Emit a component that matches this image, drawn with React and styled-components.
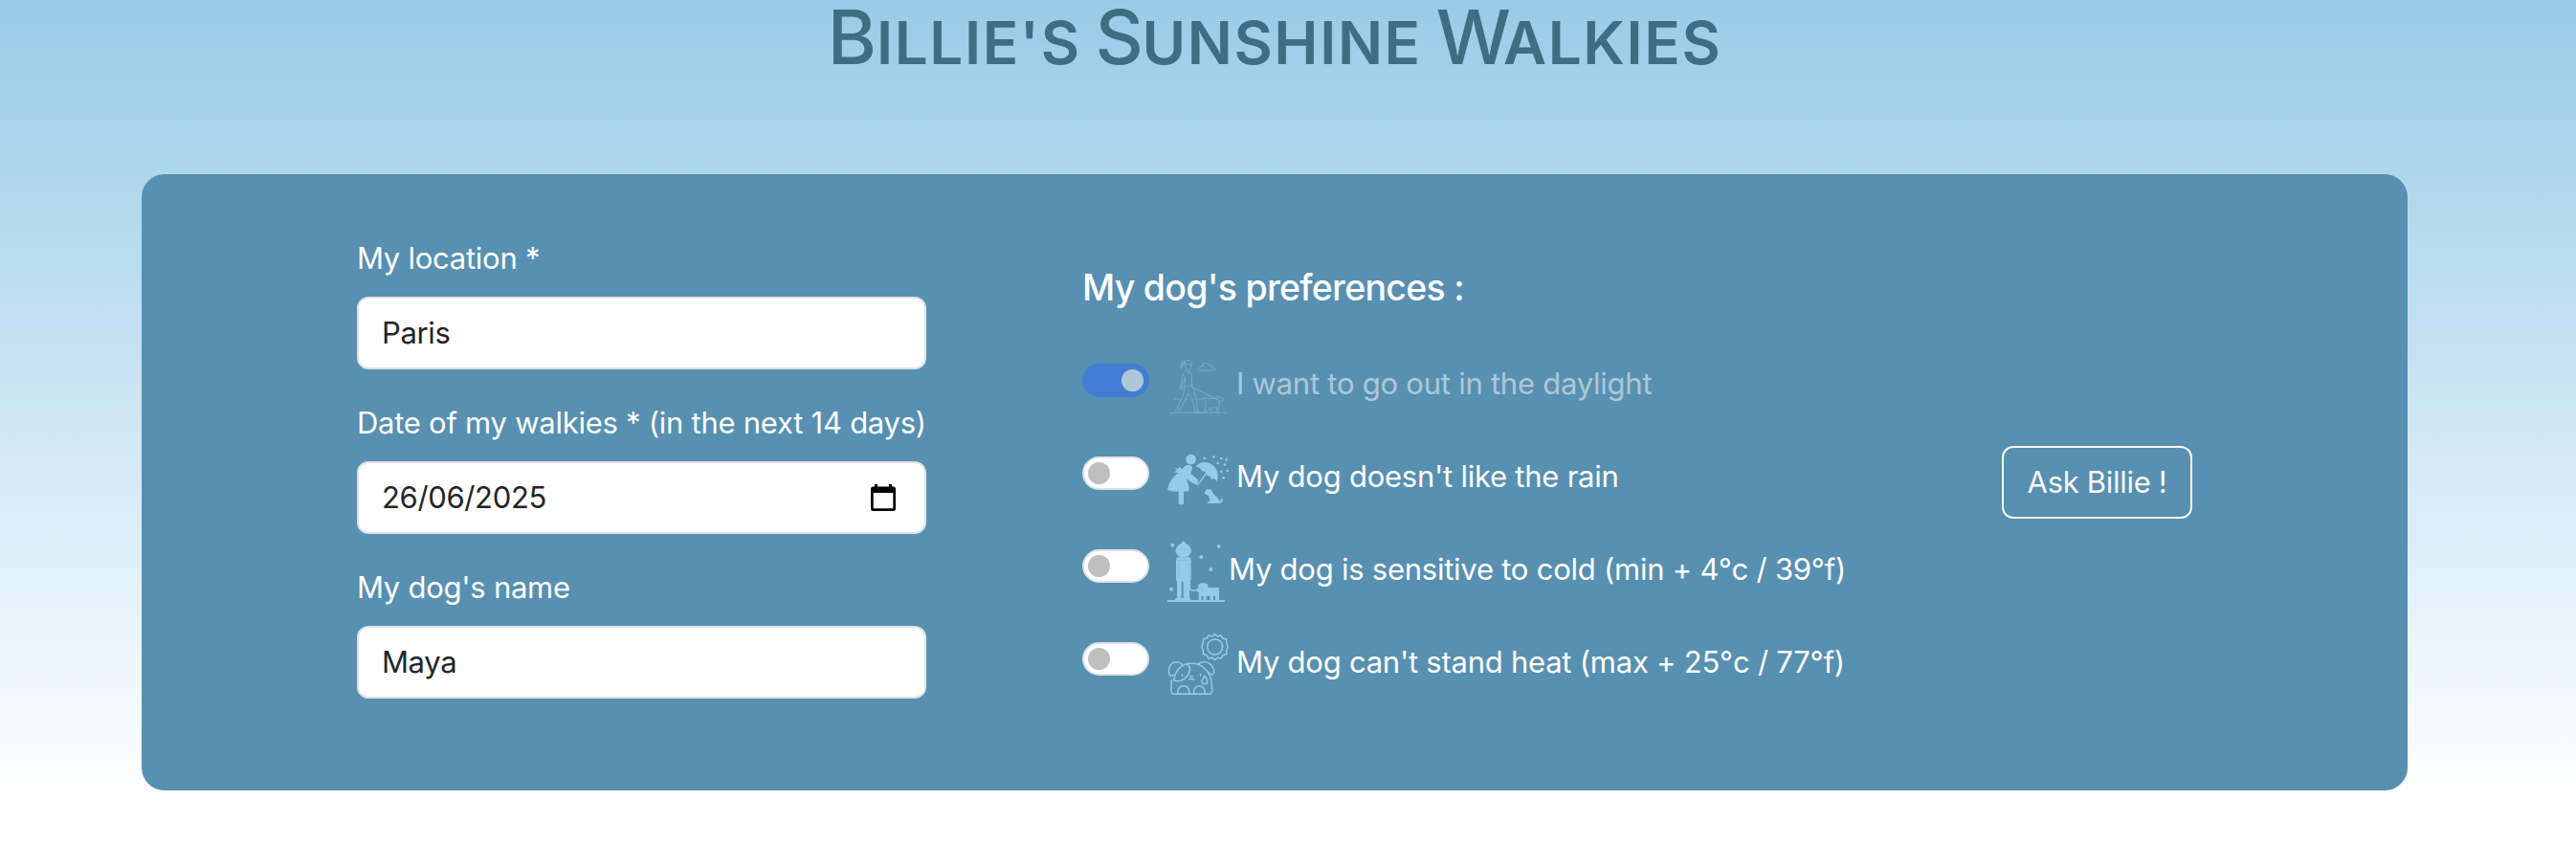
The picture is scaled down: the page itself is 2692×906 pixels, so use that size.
import React from "react";
import styled, { createGlobalStyle, css } from "styled-components";

const GlobalStyle = createGlobalStyle`
  *, *::before, *::after { box-sizing: border-box; }
  body {
    margin: 0;
    min-height: 906px;
    background: linear-gradient(#98cbe8 0, #ffffff 832px) no-repeat #ffffff;
    font-family: Inter, "Liberation Sans", sans-serif;
    font-size: 31px;
    line-height: 48px;
    color: #212529;
  }
`;

const Page = styled.main`
  width: 2664px;
  height: 906px;
  padding: 0 148px;
`;

const Title = styled.h1`
  display: flex;
  justify-content: center;
  align-items: baseline;
  gap: 15px;
  height: 182px;
  margin: 0;
  font-size: 78px;
  line-height: 78px;
  font-weight: 500;
  color: #3f6d83;
`;

const Word = styled.span`
  white-space: nowrap;
`;

const Initial = styled.span`
  letter-spacing: ${(p) => p.$kern || 0}px;
`;

const SmallCaps = styled.span`
  font-size: 62px;
  line-height: 1;
  font-weight: 600;
  letter-spacing: 1.6px;
  text-transform: uppercase;
`;

const Card = styled.form`
  display: flex;
  justify-content: center;
  align-items: center;
  gap: 163px;
  height: 644px;
  border-radius: 24px;
  background: #5790b1;
  color: #ffffff;
`;

const Fields = styled.div`
  display: flex;
  flex-direction: column;
  gap: 32px;
  width: 595px;
  padding-bottom: 32px;
`;

const Field = styled.div`
  display: flex;
  flex-direction: column;
  gap: 16px;
`;

const Label = styled.label`
  font-weight: 440;
  letter-spacing: -0.26px;
  white-space: nowrap;
`;

const Control = styled.div`
  display: flex;
  align-items: center;
  height: 76px;
  padding: 0 30px 0 24px;
  border: 2px solid #dee2e6;
  border-radius: 12px;
  background: #ffffff;
`;

const Input = styled.input`
  flex: 1;
  min-width: 0;
  height: 48px;
  padding: 0;
  border: 0;
  outline: 0;
  background: transparent;
  color: #212529;
  font: inherit;
  letter-spacing: -0.35px;
`;

const CalendarSvg = styled.svg`
  width: 26px;
  height: 28px;
`;

const Preferences = styled.fieldset`
  width: 797px;
  margin: 0 0 5px;
  padding: 0;
  border: 0;
`;

const Heading = styled.h2`
  height: 48px;
  margin: 0 0 46px;
  font-size: 37.5px;
  line-height: 48px;
  font-weight: 550;
  letter-spacing: -0.72px;
`;

const Options = styled.div`
  display: flex;
  flex-direction: column;
  gap: 33px;
`;

const Option = styled.div`
  display: flex;
  align-items: flex-start;
  height: 64px;
  opacity: ${(p) => (p.$disabled ? 0.5 : 1)};
`;

const Toggle = styled.input`
  appearance: none;
  display: flex;
  align-items: center;
  flex: none;
  width: 70px;
  height: 35px;
  margin: 9px 19px 0 0;
  padding: 0 4px;
  border: 2px solid #dee2e6;
  border-radius: 18px;
  background: #ffffff;

  &::before {
    content: "";
    width: 23px;
    height: 23px;
    border-radius: 50%;
    background: #bfbfbf;
  }

  ${(p) =>
    p.defaultChecked &&
    css`
      justify-content: flex-end;
      border-color: #316ef7;
      background: #316ef7;

      &::before {
        background: #ffffff;
      }
    `}
`;

const Icon = styled.svg`
  flex: none;
  width: 64px;
  height: 64px;
  margin-right: ${(p) => p.$gap}px;
  color: #94cbe8;
`;

const OptionLabel = styled.label`
  margin-top: 6px;
  font-weight: 440;
  letter-spacing: -0.24px;
  white-space: nowrap;
`;

const Submit = styled.button`
  width: 199px;
  height: 76px;
  padding: 0;
  border: 2px solid #f8f9fa;
  border-radius: 12px;
  background: transparent;
  color: #f8f9fa;
  font: inherit;
  font-weight: 440;
  letter-spacing: -0.3px;
`;

const CalendarIcon = () => (
  <CalendarSvg viewBox="0 0 26 28">
    <path
      fill="#000"
      fillRule="evenodd"
      d="M4 0h3v2.500h12V0h3v2.500h1.500A2.500 2.500 0 0 1 26 5v20.500a2.500 2.500 0 0 1-2.500 2.500h-21A2.500 2.500 0 0 1 0 25.500V5a2.500 2.500 0 0 1 2.500-2.500H4zM2.700 9v16.300h20.600V9z"
    />
  </CalendarSvg>
);

const DaylightIcon = ({ gap }) => (
  <Icon viewBox="30 18 192 192" $gap={gap} fill="none" stroke="currentColor" strokeWidth="2.800" strokeLinejoin="round" strokeLinecap="round">
    <path d="M84 43c-1-7 5-9 12-8s11 3 10 9c-1 3-1 4-1 7M84 43c3 4 9 5 13 4h9M86 46c0 10 2 17 8 19s10-6 10-14" />
    <path d="M86 37c-7-5-13-1-13 6s0 11-2 15c7-1 10-9 12-17M78 40c0 8-1 13-3 17" />
    <path d="M90 64v4c-6 2-9 6-11 14l-9 36c-2 5-1 9 2 10 3-1 3-5 3-9l10-29M98 65v4c6 2 8 6 8 14l-1 18 3 16" />
    <path d="M90 69l6 8 4-7M86 83c1 11-1 18-3 33h23l2-2M75 119c0 4 2 6 5 3" />
    <path d="M83 116c0 16-3 25-8 36l-15 34 8 5 18-32 9-22 14 26 8 32h7l-2-34-13-44" />
    <path d="M60 186c-3 2-5 5-4 9 4 3 9 3 13-3M116 192c0 3-1 4-1 7h18c0-4-5-5-9-7" />
    <path d="M108 117c3 3 6 6 11 8l70 34" />
    <path d="M126 65c0-7 4-9 10-9 1-7 5-12 12-13 6 1 9 3 11 8 7-3 11 0 11 6 6 0 9 3 9 8zM137 53c3-2 6-2 9-1" />
    <path transform="translate(0 -5)" d="M146 165c-2-4-2-8 0-11 4 6 9 6 15 5h22l6-8 4 4 13 5c0 5-5 8-12 8l-4 18v18h-9c0-4 2-5 5-6l-2-12c-7 3-13 3-20 1-3 4-5 8-11 14v3h-12c1-4 3-5 7-6 0-6-1-17 2-25zM188 160l3 11M164 190v8h8" />
    <path d="M51 156h18M86 156h6M111 156h7M126 156h18" />
    <path d="M39 199h160M204 199h9" />
  </Icon>
);

const RainIcon = ({ gap }) => (
  <Icon viewBox="30 24 192 192" $gap={gap} fill="currentColor">
    <circle cx="104" cy="60" r="16" />
    <path d="M78 90c4-10 15-15 23-12 7 3 8 9 5 17l-3 10 21 17c4 4 3 10-1 14-3 3-8 3-12 0l-22-16c5 12 9 24 9 38-7 3-12 3-17 3v38c-1 4-15 4-16 0v-38c-14 0-24-2-35-6 5-24 18-43 42-58-1-3-1-5 0-7z" />
    <path d="M70 104l-10-3-9 1 8-8-5-7 11 2 3-7 7 8z" />
    <path d="M119 83c9-16 36-19 53-5 16 14 20 32 13 51-6-9-12-10-17-5-1-8-5-12-12-11-2-9-8-15-17-16-6-9-12-14-20-14z" />
    <path d="M157 96l-31 43-7-3" fill="none" stroke="currentColor" strokeWidth="4" strokeLinecap="round" />
    <path d="M146 163c4-2 5-9 12-10 8 0 12 5 14 11 2 5 5 8 13 14 4 4 6 9 7 13 4-1 6-4 7-8 4 0 5 3 3 7-2 6-5 8-9 8h-38c0-5 4-7 8-7-1-7-4-13-4-19-5 2-12-2-13-9z" />
    <circle cx="146" cy="57" r="4" /><circle cx="175" cy="52" r="4" />
    <circle cx="199" cy="57" r="4" /><circle cx="215" cy="61" r="4" />
    <circle cx="188" cy="72" r="4" /><circle cx="210" cy="77" r="4" />
    <circle cx="218" cy="96" r="4" /><circle cx="199" cy="99" r="4" />
    <circle cx="206" cy="118" r="4" />
  </Icon>
);

const ColdIcon = ({ gap }) => (
  <Icon viewBox="30 30 192 192" $gap={gap} fill="currentColor">
    <path d="M74 38c0-9 12-9 12 0 10 4 17 11 17 20h2v9c-2 1-4 1-4 3 0 5-5 9-11 11h-20c-6-2-11-6-11-11l-4-3v-9h2c0-9 7-16 17-20z" />
    <path d="M62 82h37c4 3 5 8 5 13v57c0 4-3 4-5 2v57c3 1 4 3 4 6H53c0-4 3-6 7-7v-55c-4 0-3-4-3-7V95c0-5 1-10 5-13z" />
    <path d="M60 206h15M80 206h17M62 91h35M62 58h37M65 98v50M97 98v50" fill="none" stroke="#6fabd0" strokeWidth="1.200" />
    <path d="M74 158h6v52h-6z" fill="#5790b1" />
    <path d="M100 154c0 17-1 31 6 32h20" fill="none" stroke="currentColor" strokeWidth="4" />
    <path d="M128 168c3-6 9-6 14-5 7 0 12 0 16 8l-1 6h32q3 0 3 3v37h-12v-14h-6v14h-10v-14h-12v14h-9v-14h-6v14h-9v-24l-4-5z" />
    <path d="M122 181c7-5 14-2 14 5-4 6-11 5-14 0z" />
    <path d="M127 179c8-2 14 3 11 10" fill="none" stroke="#6fabd0" strokeWidth="1.200" />
    <path d="M30 216h180v6H30z" />
    <circle cx="46" cy="44" r="6" /><circle cx="191" cy="48" r="6" />
    <circle cx="136" cy="81" r="6" /><circle cx="166" cy="120" r="6" />
    <circle cx="42" cy="182" r="6" />
  </Icon>
);

const HeatIcon = ({ gap }) => (
  <Icon viewBox="30 21 192 192" $gap={gap} fill="none" stroke="currentColor" strokeWidth="4.500" strokeLinejoin="round" strokeLinecap="round">
    <circle cx="179" cy="63" r="24" />
    <path d="M179 23l8 7 11-3 6 9 11 3v11l4 13-4 12v11l-11 3-6 10-11-2-8 7-9-7-11 2-6-10-11-3v-11l-4-12 4-13V39l11-3 6-9 11 3z" />
    <path d="M50 166C57 132 76 115 106 115S160 134 168 170l2 30c0 8-4 11-10 11H52c-7 0-10-4-10-11v-22l1-11" />
    <path d="M76 118c-8-9-24-11-32-3-11 10-12 28-7 36 3 4 7 3 11-1M94 117c12 14 6 35-16 49-9 5-18 5-28 2" />
    <path d="M125 118c10-12 34-10 44 4 8 10 10 22 3 27-5 3-9-1-13-7" />
    <path d="M63 210c-4-11 5-25 18-25s20 13 17 25M113 210c-4-11 5-25 17-25s20 13 17 25" />
    <path d="M76 149v5M134 148v5M101 155h9M98 166c1-4 14-4 15 0" />
    <path d="M147 154c6 9 10 14 8 20-2 7-14 7-17 0-2-6 3-11 9-20z" />
  </Icon>
);

const words = [
  { initial: "B", rest: "illie's", kern: 0 },
  { initial: "S", rest: "unshine", kern: -1.5 },
  { initial: "W", rest: "alkies", kern: -8 },
];

const fields = [
  { id: "location", label: "My location *", value: "Paris" },
  { id: "date", label: "Date of my walkies * (in the next 14 days)", value: "26/06/2025", calendar: true },
  { id: "name", label: "My dog's name", value: "Maya" },
];

const options = [
  { id: "daylight", label: "I want to go out in the daylight", Picture: DaylightIcon, gap: 8, on: true },
  { id: "rain", label: "My dog doesn't like the rain", Picture: RainIcon, gap: 8 },
  { id: "cold", label: "My dog is sensitive to cold (min + 4°c / 39°f)", Picture: ColdIcon, gap: 0 },
  { id: "heat", label: "My dog can't stand heat (max + 25°c / 77°f)", Picture: HeatIcon, gap: 8 },
];

export default function App() {
  return (
    <>
      <GlobalStyle />
      <Page>
        <Title>
          {words.map((w) => (
            <Word key={w.initial}>
              <Initial $kern={w.kern}>{w.initial}</Initial>
              <SmallCaps>{w.rest}</SmallCaps>
            </Word>
          ))}
        </Title>
        <Card>
          <Fields>
            {fields.map((f) => (
              <Field key={f.id}>
                <Label htmlFor={f.id}>{f.label}</Label>
                <Control>
                  <Input id={f.id} type="text" defaultValue={f.value} />
                  {f.calendar && <CalendarIcon />}
                </Control>
              </Field>
            ))}
          </Fields>
          <Preferences>
            <Heading>My dog's preferences :</Heading>
            <Options>
              {options.map(({ id, label, Picture, gap, on }) => (
                <Option key={id} $disabled={on}>
                  <Toggle id={id} type="checkbox" role="switch" defaultChecked={on} disabled={on} />
                  <Picture gap={gap} />
                  <OptionLabel htmlFor={id}>{label}</OptionLabel>
                </Option>
              ))}
            </Options>
          </Preferences>
          <Submit type="button">Ask Billie !</Submit>
        </Card>
      </Page>
    </>
  );
}
